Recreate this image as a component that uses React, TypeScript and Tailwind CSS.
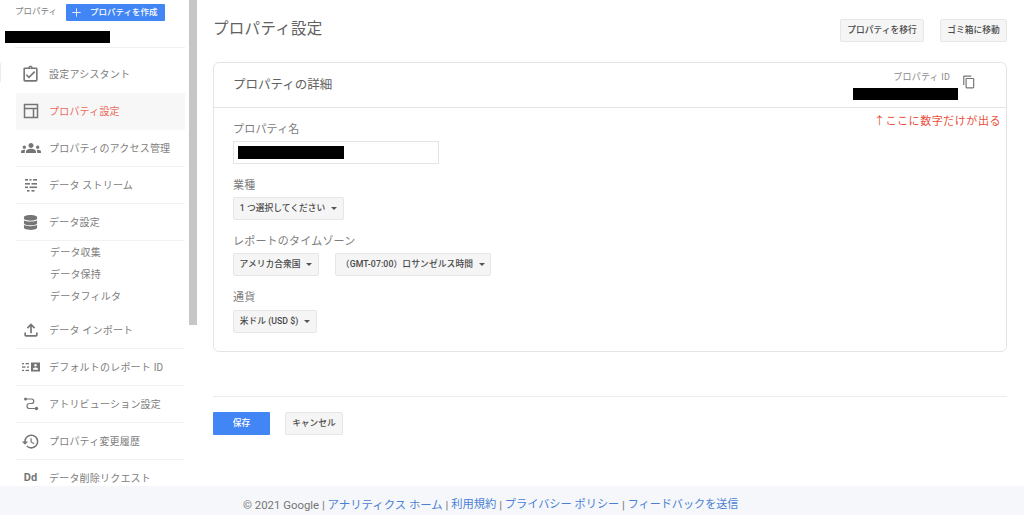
import React from "react";
import { MdContentCopy, MdGroups, MdHistory, MdOutlineAssignmentTurnedIn, MdOutlineFileUpload } from "react-icons/md";
import { FaDatabase } from "react-icons/fa";
import { Plus } from "lucide-react";

const font = "font-['Roboto','Noto_Sans_CJK_JP',sans-serif]";

const LayoutIcon = () => (
  <svg width="18" height="18" viewBox="0 0 18 18" fill="none" stroke="#757575" strokeWidth="1.5">
    <rect x="2.5" y="2.5" width="13" height="13" />
    <path d="M2.5 6.5h13M11.5 6.5v9" />
  </svg>
);

const StreamIcon = () => (
  <svg width="18" height="18" viewBox="0 0 18 18" fill="#757575">
    <rect x="3" y="3" width="3" height="1.6" />
    <rect x="7.5" y="3" width="2" height="1.6" />
    <rect x="11" y="3" width="4" height="1.6" />
    <rect x="3" y="7" width="5" height="1.6" />
    <rect x="9.5" y="7" width="5.5" height="1.6" />
    <rect x="3" y="10.5" width="3" height="1.6" />
    <rect x="7.5" y="10.5" width="7.5" height="1.6" />
    <rect x="5" y="14" width="2.5" height="1.6" />
    <rect x="9.5" y="14" width="3" height="1.6" />
  </svg>
);

const ReportIdIcon = () => (
  <svg width="20" height="18" viewBox="0 0 20 18" fill="#757575">
    <rect x="1" y="5" width="2" height="1.3" />
    <rect x="4.500" y="5" width="3.500" height="1.3" />
    <rect x="1" y="8.4" width="3.500" height="1.3" />
    <rect x="6" y="8.4" width="2" height="1.3" />
    <rect x="1" y="11.8" width="2" height="1.3" />
    <rect x="4.500" y="11.8" width="3.500" height="1.3" />
    <path d="M10 4.500h9v9h-9zM14.500 6a1.300 1.300 0 1 0 0 2.600 1.300 1.300 0 0 0 0-2.600zM12 11.800h5v-.8c0-1-1.600-1.500-2.500-1.500s-2.500.5-2.500 1.500z" fillRule="evenodd" />
  </svg>
);

const AttributionIcon = () => (
  <svg width="18" height="18" viewBox="0 0 18 18" fill="none" stroke="#757575" strokeWidth="1.2">
    <circle cx="3.500" cy="4" r="1.500" fill="#757575" stroke="none" />
    <circle cx="14.500" cy="13.500" r="1.700" fill="#757575" stroke="none" />
    <path d="M4 4h5.500a2.200 2.200 0 0 1 0 4.500h-2a2.500 2.500 0 0 0 0 5h6" />
  </svg>
);

type RowProps = { icon: React.ReactNode; label: string; active?: boolean; noBorder?: boolean };

const NavRow = ({ icon, label, active, noBorder }: RowProps) => (
  <div className={`flex h-[37px] shrink-0 items-center border-b ${noBorder ? "border-transparent" : "border-[#f3f3f3]"} ${active ? "bg-[#f7f7f7]" : ""}`}>
    <div className="flex w-[33px] shrink-0 justify-center pr-[4px]">{icon}</div>
    <span className={`text-[10px] tracking-[0.2px] ${active ? "text-[#ea6a5c]" : "text-[#7d7d7d]"}`}>{label}</span>
  </div>
);

const SubRow = ({ label }: { label: string }) => (
  <div className="flex h-[22px] items-center pl-[34px] text-[10px] tracking-[0.2px] text-[#7d7d7d]">{label}</div>
);

const GrayButton = ({ children, className = "" }: { children: React.ReactNode; className?: string }) => (
  <button className={`flex h-[23px] items-center justify-center rounded-[2px] border border-[#e6e6e6] bg-[#f5f5f5] text-[8.750px] font-medium whitespace-nowrap text-[#4a4a4a] ${className}`}>
    {children}
  </button>
);

const Select = ({ label, className = "" }: { label: string; className?: string }) => (
  <GrayButton className={`gap-[6px] ${className}`}>
    <span>{label}</span>
    <span className="h-0 w-0 border-x-[3px] border-t-[3px] border-x-transparent border-t-[#555]" />
  </GrayButton>
);

const Label = ({ children }: { children: React.ReactNode }) => (
  <div className="text-[11px] leading-[16px] tracking-[0.2px] text-[#7d7d7d]">{children}</div>
);

export default function App() {
  return (
    <div className={`flex h-[515px] w-[1024px] flex-col overflow-hidden bg-white ${font}`}>
      <div className="flex h-[486px] shrink-0 overflow-hidden">
        {/* Sidebar */}
        <aside className="relative w-[189px] shrink-0 overflow-hidden">
          <div className="absolute top-[63px] left-0 h-[19px] w-px bg-[#ececec]" />
          <div className="flex h-[21px] items-end pl-[15px]">
            <span className="mr-[9px] pb-[3px] text-[8.500px] text-[#7d7d7d]">プロパティ</span>
            <button className="flex h-[17px] w-[99px] items-center gap-[7px] rounded-[1px] bg-[#4285f4] pl-[4px] text-[8.500px] font-medium text-white">
              <Plus size={13} strokeWidth={1.6} />
              プロパティを作成
            </button>
          </div>
          <div className="mt-[10px] ml-[5px] h-[12px] w-[105px] bg-black" />
          <div className="mt-[4px] ml-[15px] w-[170px] border-t border-[#f0f0f0]" />
          <nav className="mt-[8px] ml-[16px] flex w-[169px] flex-col">
            <NavRow icon={<MdOutlineAssignmentTurnedIn size={19} color="#757575" />} label="設定アシスタント" noBorder />
            <NavRow icon={<LayoutIcon />} label="プロパティ設定" active noBorder />
            <NavRow icon={<MdGroups size={20} color="#757575" />} label="プロパティのアクセス管理" />
            <NavRow icon={<StreamIcon />} label="データ ストリーム" />
            <NavRow icon={<FaDatabase size={15} color="#757575" />} label="データ設定" />
            <div className="flex flex-col pb-[5px]">
              <SubRow label="データ収集" />
              <SubRow label="データ保持" />
              <SubRow label="データフィルタ" />
            </div>
            <NavRow icon={<MdOutlineFileUpload size={20} color="#757575" />} label="データ インポート" />
            <NavRow icon={<ReportIdIcon />} label="デフォルトのレポート ID" />
            <NavRow icon={<AttributionIcon />} label="アトリビューション設定" />
            <NavRow icon={<MdHistory size={19} color="#757575" />} label="プロパティ変更履歴" />
            <NavRow icon={<span className="text-[11px] font-bold text-[#757575]">Dd</span>} label="データ削除リクエスト" noBorder />
          </nav>
        </aside>

        {/* Scrollbar */}
        <div className="w-[8px] shrink-0">
          <div className="h-[325px] w-full bg-[#c6c6c6]" />
        </div>

        {/* Main */}
        <main className="ml-[16px] w-[794px] shrink-0">
          <div className="flex h-[62px] items-start justify-between pt-[19px]">
            <h1 className="text-[15.500px] leading-[20px] font-normal tracking-[0.3px] text-[#616161]">プロパティ設定</h1>
            <div className="flex gap-[16px]">
              <GrayButton className="w-[84px]">プロパティを移行</GrayButton>
              <GrayButton className="w-[67px]">ゴミ箱に移動</GrayButton>
            </div>
          </div>

          <section className="h-[290px] rounded-[6px] border border-[#e4e4e4]">
            <div className="flex h-[45px] items-center justify-between border-b border-[#e4e4e4] pr-[30px] pl-[19px]">
              <h2 className="text-[12.500px] font-normal text-[#616161]">プロパティの詳細</h2>
              <div className="flex items-start gap-[4px] pt-[4px]">
                <div className="flex flex-col items-end">
                  <span className="-mt-[3px] pr-[8px] text-[9px] leading-[11px] tracking-[0.2px] text-[#8a8a8a]">プロパティ ID</span>
                  <div className="mt-[5px] h-[12px] w-[105px] bg-black" />
                </div>
                <MdContentCopy size={14} color="#757575" />
              </div>
            </div>

            <div className="relative px-[19px] pt-[14px]">
              <span className="absolute top-[6px] right-[5px] text-[11px] tracking-[0.55px] text-[#ea4f3a]">↑ここに数字だけが出る</span>
              <Label>プロパティ名</Label>
              <div className="mt-[3px] flex h-[23px] w-[206px] items-center border border-[#e4e4e4] pl-[4px]">
                <div className="h-[13px] w-[106px] bg-black" />
              </div>
              <div className="mt-[14px]"><Label>業種</Label></div>
              <Select label="1 つ選択してください" className="mt-[3px] w-[111px]" />
              <div className="mt-[14px]"><Label>レポートのタイムゾーン</Label></div>
              <div className="mt-[3px] flex gap-[16px]">
                <Select label="アメリカ合衆国" className="w-[86px]" />
                <Select label="（GMT-07:00）ロサンゼルス時間" className="w-[156px] tracking-[0.1px]" />
              </div>
              <div className="mt-[14px]"><Label>通貨</Label></div>
              <Select label="米ドル (USD $)" className="mt-[4px] w-[84px]" />
            </div>
          </section>

          <div className="mt-[44px] border-t border-[#ececec]" />
          <div className="mt-[15px] flex gap-[15px]">
            <button className="h-[23px] w-[57px] rounded-[1px] bg-[#4285f4] text-[8.750px] font-medium text-white">保存</button>
            <GrayButton className="w-[58px]">キャンセル</GrayButton>
          </div>
        </main>
      </div>

      {/* Footer */}
      <footer className="flex h-[29px] shrink-0 items-center bg-[#f5f7fa] pt-[10px] pl-[243px] text-[11.400px] text-[#757575]">
        © 2021 Google |&nbsp;<a className="text-[#4a7fd6]">アナリティクス ホーム</a>&nbsp;|&nbsp;<a className="text-[11.300px] text-[#4a7fd6]">利用規約</a>&nbsp;|&nbsp;<a className="text-[11.200px] text-[#4a7fd6]">プライバシー ポリシー</a>&nbsp;|&nbsp;<a className="text-[11.100px] text-[#4a7fd6]">フィードバックを送信</a>
      </footer>
    </div>
  );
}
